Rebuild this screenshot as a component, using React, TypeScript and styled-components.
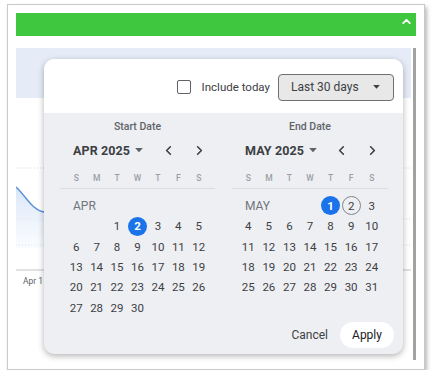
import React from 'react';
import styled, { createGlobalStyle } from 'styled-components';
import { ChevronLeft, ChevronRight, ChevronUp } from 'lucide-react';

const GlobalStyle = createGlobalStyle`
  html, body {
    margin: 0;
    padding: 0;
    background: #ffffff;
    font-family: Roboto, "Noto Sans", Arial, sans-serif;
  }
`;

type Cell =
  | { kind: 'label'; span: number; text: string }
  | { kind: 'blank' }
  | { kind: 'day'; day: number };

// month grid: label shares the first row when the week starts late enough
const buildCells = (year: number, month: number, short: string): Cell[] => {
  const first = new Date(year, month, 1).getDay();
  const count = new Date(year, month + 1, 0).getDate();
  const cells: Cell[] = [];
  if (first >= 3) {
    cells.push({ kind: 'label', span: first, text: short });
  } else {
    cells.push({ kind: 'label', span: 7, text: short });
    for (let i = 0; i < first; i++) cells.push({ kind: 'blank' });
  }
  for (let d = 1; d <= count; d++) cells.push({ kind: 'day', day: d });
  return cells;
};

const WEEKDAYS = ['S', 'M', 'T', 'W', 'T', 'F', 'S'];

const Caret: React.FC<{ color?: string; size?: number }> = ({ color = '#5f6368', size = 8 }) => (
  <svg width={size} height={size * 0.6} viewBox="0 0 8 5">
    <path d="M0 0 L8 0 L4 4.5 Z" fill={color} />
  </svg>
);

interface CalendarProps {
  title: string;
  heading: string;
  cells: Cell[];
  selected?: number;
  outlined?: number;
}

const Calendar: React.FC<CalendarProps> = ({ title, heading, cells, selected, outlined }) => (
  <CalColumn>
    <CalTitle>{title}</CalTitle>
    <MonthRow>
      <MonthName>
        {heading}
        <Caret />
      </MonthName>
      <NavButtons>
        <NavButton>
          <ChevronLeft size={15} strokeWidth={2.6} />
        </NavButton>
        <NavButton>
          <ChevronRight size={15} strokeWidth={2.6} />
        </NavButton>
      </NavButtons>
    </MonthRow>
    <WeekRow>
      {WEEKDAYS.map((w, i) => (
        <WeekDay key={i}>{w}</WeekDay>
      ))}
    </WeekRow>
    <DayGrid>
      {cells.map((c, i) => {
        if (c.kind === 'label') {
          return (
            <MonthLabel key={i} span={c.span}>
              {c.text}
            </MonthLabel>
          );
        }
        if (c.kind === 'blank') return <span key={i} />;
        return (
          <DayCell key={i}>
            <Day selected={c.day === selected} outlined={c.day === outlined}>
              {c.day}
            </Day>
          </DayCell>
        );
      })}
    </DayGrid>
  </CalColumn>
);

const App: React.FC = () => {
  const april = buildCells(2025, 3, 'APR');
  const may = buildCells(2025, 4, 'MAY');

  return (
    <>
      <GlobalStyle />
      <Card>
        <GreenBar>
          <ChevronUp size={13} strokeWidth={3.5} color="#ffffff" />
        </GreenBar>
        <Content>
          <Main>
            <BlueStrip />
            <ChartArea>
              <svg width="395" height="262" viewBox="0 0 395 262">
                <defs>
                  <linearGradient id="fill" x1="0" y1="0" x2="0" y2="1">
                    <stop offset="0" stopColor="#d3e2f7" stopOpacity="0.9" />
                    <stop offset="1" stopColor="#f1f6fd" stopOpacity="0.4" />
                  </linearGradient>
                </defs>
                <line x1="0" y1="70" x2="395" y2="70" stroke="#d8d8d8" strokeDasharray="1 2" />
                <line x1="0" y1="121" x2="395" y2="121" stroke="#d8d8d8" strokeDasharray="1 2" />
                <line x1="0" y1="147" x2="395" y2="147" stroke="#d8d8d8" strokeDasharray="1 2" />
                <line x1="0" y1="172" x2="395" y2="172" stroke="#c4c4c4" />
                <path d="M0 89 C10 98 16 112 28 114 L60 114 L60 150 L0 150 Z" fill="url(#fill)" />
                <path d="M0 89 C10 98 16 112 28 114 L60 114" fill="none" stroke="#5b8fd6" strokeWidth="1.4" />
                <text x="7" y="186" fontSize="8.5" fill="#5f6368" fontFamily="Roboto, Arial, sans-serif">
                  Apr 1
                </text>
              </svg>
            </ChartArea>
          </Main>
          <ScrollBar />

          <Popup>
            <PopupHeader>
              <CheckBox />
              <CheckLabel>Include today</CheckLabel>
              <RangeSelect>
                Last 30 days
                <Caret color="#3c4043" size={7} />
              </RangeSelect>
            </PopupHeader>
            <PopupBody>
              <Calendars>
                <Calendar title="Start Date" heading="APR 2025" cells={april} selected={2} />
                <Calendar title="End Date" heading="MAY 2025" cells={may} selected={1} outlined={2} />
              </Calendars>
              <Footer>
                <CancelButton>Cancel</CancelButton>
                <ApplyButton>Apply</ApplyButton>
              </Footer>
            </PopupBody>
          </Popup>
        </Content>
      </Card>
    </>
  );
};

export default App;

const Card = styled.div`
  margin: 4px 0 0 7px;
  width: 418px;
  height: 366px;
  border: 1px solid #c9c9c9;
  box-shadow: 2px 3px 4px rgba(0, 0, 0, 0.28);
  padding: 8px 8px 0 8px;
  box-sizing: border-box;
  display: flex;
  flex-direction: column;
  background: #ffffff;
`;

const GreenBar = styled.div`
  height: 23px;
  background: #3fc83f;
  display: flex;
  align-items: flex-start;
  justify-content: flex-end;
  padding: 2px 3px 0 0;
  box-sizing: border-box;
  flex-shrink: 0;
`;

const Content = styled.div`
  position: relative;
  margin-top: 12px;
  height: 312px;
  display: flex;
`;

const Main = styled.div`
  width: 395px;
  display: flex;
  flex-direction: column;
`;

const BlueStrip = styled.div`
  height: 50px;
  background: #e6ecf7;
`;

const ChartArea = styled.div`
  flex: 1;
  overflow: hidden;
`;

const ScrollBar = styled.div`
  width: 3px;
  margin-left: 2px;
  background: #a2a2a2;
`;

const Popup = styled.div`
  position: absolute;
  left: 28px;
  top: 11px;
  width: 359px;
  height: 295px;
  border-radius: 10px;
  overflow: hidden;
  background: #eeeff3;
  box-shadow: 0 2px 6px rgba(0, 0, 0, 0.3);
  display: flex;
  flex-direction: column;
`;

const PopupHeader = styled.div`
  height: 54px;
  background: #ffffff;
  display: flex;
  align-items: center;
  justify-content: flex-end;
  padding: 2px 9px 0 0;
  box-sizing: border-box;
`;

const CheckBox = styled.span`
  width: 14px;
  height: 14px;
  border: 1.5px solid #5f6368;
  border-radius: 2px;
  box-sizing: border-box;
`;

const CheckLabel = styled.span`
  margin: 0 8px 0 11px;
  font-size: 11.5px;
  color: #3c4043;
`;

const RangeSelect = styled.div`
  width: 116px;
  height: 27px;
  box-sizing: border-box;
  border: 1px solid #6f6f6f;
  border-radius: 4px;
  background: #e8e8e8;
  display: flex;
  align-items: center;
  justify-content: space-between;
  padding: 0 13px 0 12px;
  font-size: 12px;
  color: #3c4043;
`;

const PopupBody = styled.div`
  flex: 1;
  padding: 6px 9px 0 16px;
  display: flex;
  flex-direction: column;
`;

const Calendars = styled.div`
  display: grid;
  grid-template-columns: 155px 156px;
  column-gap: 17px;
`;

const CalColumn = styled.div`
  display: flex;
  flex-direction: column;
`;

const CalTitle = styled.div`
  height: 16px;
  line-height: 16px;
  text-align: center;
  font-size: 10.5px;
  font-weight: 500;
  color: #5f6368;
`;

const MonthRow = styled.div`
  margin-top: 3px;
  height: 24px;
  display: flex;
  align-items: center;
  justify-content: space-between;
  padding: 0 4px 0 13px;
`;

const MonthName = styled.div`
  display: flex;
  align-items: center;
  gap: 5px;
  font-size: 12.5px;
  font-weight: 700;
  color: #3c4043;
  letter-spacing: 0.1px;
`;

const NavButtons = styled.div`
  display: flex;
  gap: 7px;
`;

const NavButton = styled.span`
  width: 24px;
  height: 24px;
  display: flex;
  align-items: center;
  justify-content: center;
  color: #3c4043;
`;

const WeekRow = styled.div`
  margin-top: 6px;
  height: 20px;
  display: grid;
  grid-template-columns: repeat(7, 1fr);
  padding: 0 6px;
  border-bottom: 1px solid #dadce0;
`;

const WeekDay = styled.span`
  display: flex;
  align-items: center;
  justify-content: center;
  font-size: 8.5px;
  font-weight: 500;
  color: #9aa0a6;
`;

const DayGrid = styled.div`
  margin-top: 6.6px;
  display: grid;
  grid-template-columns: repeat(7, 1fr);
  grid-auto-rows: 20.4px;
  padding: 0 6px;
`;

const MonthLabel = styled.span<{ span: number }>`
  grid-column: span ${({ span }) => span};
  display: flex;
  align-items: center;
  padding-left: 7px;
  font-size: 12px;
  color: #70757a;
`;

const DayCell = styled.span`
  display: flex;
  align-items: center;
  justify-content: center;
`;

const Day = styled.span<{ selected?: boolean; outlined?: boolean }>`
  width: 19px;
  height: 19px;
  border-radius: 50%;
  box-sizing: border-box;
  display: flex;
  align-items: center;
  justify-content: center;
  font-size: 11.5px;
  font-weight: ${({ selected }) => (selected ? 700 : 400)};
  color: ${({ selected }) => (selected ? '#ffffff' : '#3c4043')};
  background: ${({ selected }) => (selected ? '#1a73e8' : 'transparent')};
  border: ${({ outlined }) => (outlined ? '1px solid #80868b' : 'none')};
`;

const Footer = styled.div`
  margin-top: 4px;
  display: flex;
  justify-content: flex-end;
  align-items: center;
  gap: 4px;
`;

const CancelButton = styled.span`
  padding: 0 8px;
  height: 26px;
  display: flex;
  align-items: center;
  font-size: 12px;
  font-weight: 400;
  color: #3c4043;
`;

const ApplyButton = styled.span`
  width: 54px;
  height: 26px;
  border-radius: 13px;
  background: #ffffff;
  display: flex;
  align-items: center;
  justify-content: center;
  font-size: 12px;
  font-weight: 400;
  color: #202124;
`;
